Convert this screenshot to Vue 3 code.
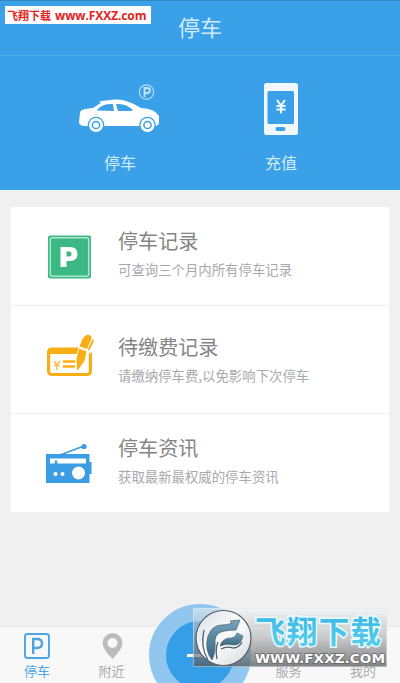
<script setup>
const records = [
  { icon: 'parking', title: '停车记录', desc: '可查询三个月内所有停车记录' },
  { icon: 'bill', title: '待缴费记录', desc: '请缴纳停车费,以免影响下次停车' },
  { icon: 'radio', title: '停车资讯', desc: '获取最新最权威的停车资讯' },
]
</script>

<template>
  <div class="screen">
    <header class="bar">
      <h1>停车</h1>
      <div class="site-tag"><b class="cn">飞翔下载</b><b class="url">www.FXXZ.com</b></div>
    </header>

    <section class="actions">
      <div class="action">
        <svg width="90" height="54" viewBox="0 0 90 54">
          <path d="M5 29Q5 26 10 25L18 24Q24 20 26 19L24 18Q27 16 32 16.500Q42 14.500 51 17Q58 19 66 24Q80 25 83 31L84 32V39Q84 41 81 42H10Q4 42 4 38Z" fill="#fff" />
          <path d="M23 25Q28 19.500 38 20L39 27L24 26.500Q20 27 23 25Z M41 20Q51 19 58 26L56 27L43 27Z" fill="#3aa0e8" />
          <circle cx="21" cy="41" r="8.300" fill="#3aa0e8" /><circle cx="21" cy="41" r="7" fill="#fff" />
          <circle cx="21" cy="41" r="3.600" fill="none" stroke="#3aa0e8" stroke-width="1.500" />
          <circle cx="72.500" cy="41" r="8.300" fill="#3aa0e8" /><circle cx="72.500" cy="41" r="7" fill="#fff" />
          <circle cx="72.500" cy="41" r="3.600" fill="none" stroke="#3aa0e8" stroke-width="1.500" />
          <circle cx="71.500" cy="8" r="7.200" fill="none" stroke="#b3dbf8" stroke-width="1.200" />
          <path d="M69.500 13V4H72Q75 4 75 6.500T72 9H69.500" fill="none" stroke="#c5e4fa" stroke-width="1.800" />
        </svg>
        <span>停车</span>
      </div>
      <div class="action">
        <svg width="34" height="54" viewBox="0 0 34 54">
          <rect y="-1" width="34" height="52" rx="2.500" fill="#f1f7fc" />
          <rect x="3.500" y="7" width="26.500" height="33" rx="1.500" fill="#3aa0e8" />
          <rect x="11.500" y="43" width="10" height="4" rx="2" fill="#3aa0e8" />
          <path d="M13 16L17 21.500L21 16M17 21V29.500M12.500 22H21.500M12.500 25.500H21.500" fill="none" stroke="#f1f7fc" stroke-width="2" />
        </svg>
        <span>充值</span>
      </div>
    </section>

    <main class="card">
      <article v-for="item in records" :key="item.icon" class="row" :class="item.icon">
        <svg v-if="item.icon === 'parking'" width="46" height="46" viewBox="0 0 46 46">
          <rect x="2" y="1.500" width="43" height="43" rx="2" fill="#3cb885" />
          <rect x="4.300" y="3.800" width="38.400" height="38.400" rx="2" fill="none" stroke="#a9e8ce" stroke-width="1.500" />
          <path fill-rule="evenodd" d="M14.500 13H24Q31.500 13 31.500 20T24 27H20.500V33H14.500ZM20.500 17.500V22.500H23Q25.500 22.500 25.500 20T23 17.500Z" fill="#fff" />
        </svg>
        <svg v-else-if="item.icon === 'bill'" width="46" height="46" viewBox="0 0 46 46">
          <rect x="2.600" y="14" width="41.800" height="25.500" rx="3" fill="none" stroke="#f9ae16" stroke-width="3.200" />
          <path d="M2 13.500H34V19H2Z" fill="#f9ae16" />
          <path d="M8 26L11 30L14 26M11 29.500V35M8 30.500H14" stroke="#fbc04c" stroke-width="1.700" fill="none" />
          <path d="M17 26.500H30M17 31.500H29" stroke="#f9ae16" stroke-width="2.300" />
          <path d="M33 10H46V17L42.500 19L37 32L30 36L29 27Z" fill="#fff" />
          <path d="M36.500 4L38.500 1.500Q41 -1.500 44 .5Q46.500 2 45 5L41 14L33.500 11.500ZM33 13.500L40.500 16.500L38.500 26L32 35H31L30.500 24ZM46 5L47.500 4V7L43 16L42 14Z" fill="#f9ae16" />
        </svg>
        <svg v-else width="46" height="46" viewBox="0 0 46 46">
          <path d="M14 13L38 4" stroke="#3b9de2" stroke-width="1.800" />
          <circle cx="38" cy="4.500" r="2.600" fill="#3b9de2" />
          <path d="M0 12H43.500V20H45.500V32H43.500V41H0Z" fill="#3b9de2" />
          <path d="M4 16.500H40V21.500H4Z" fill="#fff" /><path d="M10 18.500V22" stroke="#3b9de2" stroke-width="2.500" />
          <circle cx="32.500" cy="31" r="6.500" fill="#fff" />
          <circle cx="9.500" cy="32" r="2" fill="#fff" /><circle cx="16.500" cy="32" r="2" fill="#fff" />
        </svg>
        <div class="copy">
          <h2>{{ item.title }}</h2>
          <p>{{ item.desc }}</p>
        </div>
      </article>
    </main>

    <nav class="tabs">
      <div class="tab active">
        <svg width="28" height="28" viewBox="0 0 28 28"><rect x="2" y="2" width="24" height="24" rx="2.500" fill="none" stroke="#4ca5e3" stroke-width="1.900" /><path d="M10.200 22V7H14Q19 7 19 11.500T14 16H10.200" fill="none" stroke="#4ca5e3" stroke-width="2.400" /></svg>
        <span>停车</span>
      </div>
      <div class="tab">
        <svg width="28" height="28" viewBox="0 0 28 28"><path fill-rule="evenodd" d="M14.500 1A10 10 0 0 0 4.500 11Q4.500 17 14.500 27Q24.500 17 24.500 11A10 10 0 0 0 14.500 1ZM14.500 6A5 5 0 1 1 14.500 16A5 5 0 0 1 14.500 6Z" fill="#bcbcbc" /></svg>
        <span>附近</span>
      </div>
      <div class="tab middle"></div>
      <div class="tab"><span>服务</span></div>
      <div class="tab"><span>我的</span></div>
    </nav>
    <div class="add"><i></i></div>

    <div class="mark">
      <svg width="60" height="59" viewBox="0 0 60 59">
        <defs>
          <linearGradient id="disc" x1="0" y1="0" x2="1" y2="1"><stop stop-color="#d9dfe4" /><stop offset=".5" stop-color="#fbfcfd" /><stop offset="1" stop-color="#d5dade" /></linearGradient>
          <linearGradient id="wing" x1="0" y1="0" x2="0" y2="1"><stop stop-color="#76a3bd" /><stop offset="1" stop-color="#356580" /></linearGradient>
        </defs>
        <circle cx="30.500" cy="30" r="27.500" fill="url(#disc)" stroke="#555e65" stroke-width="1.200" />
        <path d="M19 52Q11 42 15 28Q19 17 29 17Q35 17 39 15L37 13L47 12L43 22Q38 22 32 23Q23 24 22 32Q23 44 19 52Z" fill="url(#wing)" stroke="#4c606d" stroke-width=".7" />
        <path d="M27 38Q29 31 36 30Q42 31 44 25L50 28Q48 37 41 37Q33 35 27 38Z" fill="url(#wing)" stroke="#4c606d" stroke-width=".7" />
        <path d="M11 22Q7 39 15 52M24 51Q22 41 25 34M28 41Q34 38 40 40Q46 40 49 34" fill="none" stroke="#4c606d" stroke-width="1.300" />
      </svg>
      <div class="mark-copy">
        <svg width="134" height="59" viewBox="0 0 134 59">
          <defs><linearGradient id="sky" x1="0" y1="0" x2="0" y2="1"><stop stop-color="#35b4e2" /><stop offset="1" stop-color="#5fd0ee" /></linearGradient></defs>
          <text class="mark-cn" x="2" y="35" textLength="126" lengthAdjust="spacing">飞翔下载</text>
          <text class="mark-url" x="2" y="55" textLength="130" lengthAdjust="spacingAndGlyphs">WWW.FXXZ.COM</text>
        </svg>
      </div>
    </div>
  </div>
</template>

<style>
body { margin: 0; overflow: hidden; }
</style>

<style scoped>
.screen { position: relative; box-sizing: border-box; width: 400px; height: 683px; overflow: hidden; display: flex; flex-direction: column; background: #f0f0f0; font-family: "Noto Sans CJK SC", sans-serif; }
h1, h2, p { margin: 0; font-weight: 400; }
.bar { height: 55px; flex: none; display: flex; justify-content: center; background: #3aa0e8; border-bottom: 1px solid #50abeb; box-shadow: inset 0 1px #3186c4; }
h1 { font-size: 22px; line-height: 53px; color: #d0eafc; }
.site-tag { position: absolute; left: 5px; top: 6px; width: 146px; height: 18px; display: flex; align-items: center; gap: 4px; background: #fff; color: #e42222; white-space: nowrap; box-sizing: border-box; padding-left: 2px; }
.cn { font-size: 11px; }
.url { font: bold 12px "Open Sans", sans-serif; letter-spacing: -.1px; }
.actions { height: 134px; flex: none; display: grid; grid-template-columns: 162px 160px; padding-left: 39px; background: #3aa0e8; box-sizing: border-box; padding-top: 28px; }
.action { display: flex; flex-direction: column; align-items: center; gap: 12px; color: #d2ebfc; font-size: 16px; line-height: 24px; }
.action svg { overflow: visible; }
.card { width: 378px; height: 305px; flex: none; margin: 17px 0 0 11px; background: #fff; display: grid; grid-template-rows: 99px 108px 98px; }
.row { display: flex; align-items: center; gap: 26px; padding-left: 35px; border-bottom: 1px solid #eee; box-sizing: border-box; }
.row svg { overflow: visible; }
.row:last-child { border: 0; }
.copy { padding-bottom: 8px; }
.parking { padding-top: 1px; }
.bill { padding-bottom: 4px; }
.bill .copy { padding-bottom: 0; padding-top: 2px; }
.radio { padding-top: 3px; }
.radio .copy { padding-bottom: 10px; }
h2 { font-size: 20.100px; line-height: 30px; color: #858585; }
p { font-size: 13.400px; line-height: 20px; margin-top: 3px; color: #a7a9ae; }
.tabs { margin-top: auto; height: 57px; border-top: 1px solid #ececec; box-sizing: border-box; background: #f8f8f8; display: grid; grid-template-columns: 74px 75px 102px 75px 74px; }
.tab { display: flex; flex-direction: column; align-items: center; justify-content: flex-end; gap: 1px; color: #aaa; font-size: 13px; line-height: 20px; padding-bottom: 2px; box-sizing: border-box; }
.tab.active { color: #4ca5e3; }
.add { position: absolute; left: 149px; top: 604px; width: 102px; height: 102px; box-sizing: border-box; border: 17px solid #91c7ee; border-radius: 50%; background: #359ee8; display: flex; align-items: center; justify-content: center; }
.add i { width: 27px; height: 3px; background: #fff; }
.mark { position: absolute; left: 193px; top: 608px; width: 194px; height: 59px; display: flex; background: linear-gradient(rgba(245,248,250,.5), rgba(166,170,173,.6) 50%, rgba(80,83,86,.72)); box-shadow: inset 0 0 0 1px rgba(225,230,233,.55); }
.mark-copy { width: 134px; }
.mark-cn { font: 700 30.500px "Noto Sans CJK SC", sans-serif; fill: url(#sky); stroke: #e9fbff; stroke-width: 3px; paint-order: stroke fill; }
.mark-url { font: bold 13px "DejaVu Sans", sans-serif; fill: #fff; stroke: #666; stroke-width: 1.500px; paint-order: stroke fill; }
</style>
